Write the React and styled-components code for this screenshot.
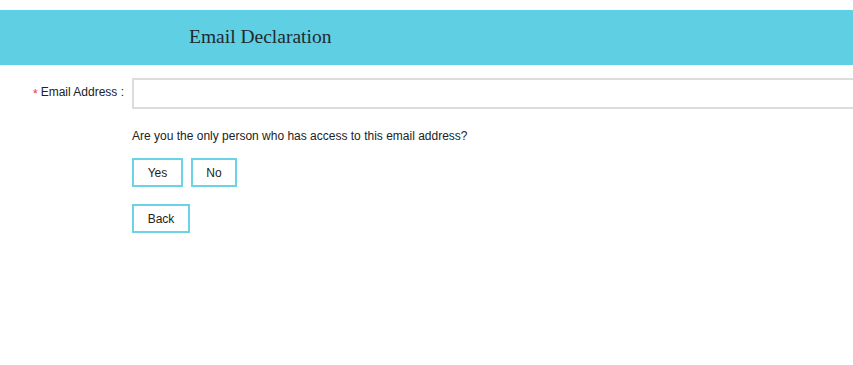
import React from 'react';
import styled, { createGlobalStyle } from 'styled-components';

const GlobalStyle = createGlobalStyle`
  body {
    margin: 0;
    background: #ffffff;
    font-family: Arial, "Liberation Sans", sans-serif;
    overflow: hidden;
  }
`;

const Page = styled.div`
  width: 853px;
  height: 365px;
  padding-top: 10px;
  box-sizing: border-box;
  overflow: hidden;
`;

const Header = styled.div`
  height: 55px;
  background: #5fcfe3;
  display: flex;
  align-items: center;
  padding-left: 189px;
`;

const Title = styled.h1`
  margin: 0;
  font-family: "Liberation Serif", "Times New Roman", serif;
  font-weight: normal;
  font-size: 19.5px;
  color: #222a30;
  padding-bottom: 1px;
`;

const Form = styled.div`
  padding-top: 13px;
`;

const FieldRow = styled.div`
  display: flex;
  align-items: center;
  overflow: hidden;
`;

const Label = styled.label`
  flex: none;
  width: 132px;
  box-sizing: border-box;
  padding-right: 8px;
  padding-bottom: 3px;
  display: flex;
  justify-content: flex-end;
  align-items: center;
  white-space: nowrap;
  font-size: 12px;
  color: #222;
  gap: 3px;
`;

const Required = styled.span`
  color: #e8334a;
  font-size: 12px;
  margin-top: 3px;
`;

const Input = styled.input`
  flex: none;
  width: 760px;
  height: 31px;
  box-sizing: border-box;
  border: 2px solid #dcdcdc;
  outline: none;
  padding: 0 8px;
  font-size: 12px;
`;

const Body = styled.div`
  padding-left: 132px;
  padding-top: 20px;
  display: flex;
  flex-direction: column;
  align-items: flex-start;
`;

const Question = styled.p`
  margin: 0;
  font-size: 12px;
  color: #222;
  line-height: 14px;
`;

const ButtonRow = styled.div`
  display: flex;
  gap: 8px;
  margin-top: ${(props) => props.$top}px;
`;

const Button = styled.button`
  height: 29px;
  width: ${(props) => props.$w}px;
  box-sizing: border-box;
  background: #fff;
  border: 2px solid #6ad3e6;
  font-family: Arial, "Liberation Sans", sans-serif;
  font-size: 12px;
  color: #222;
  padding: 0;
  cursor: pointer;
`;

const App = () => {
  return (
    <Page>
      <GlobalStyle />
      <Header>
        <Title>Email Declaration</Title>
      </Header>
      <Form>
        <FieldRow>
          <Label>
            <Required>*</Required>Email Address :
          </Label>
          <Input type="text" />
        </FieldRow>
        <Body>
          <Question>Are you the only person who has access to this email address?</Question>
          <ButtonRow $top={15}>
            <Button $w={51}>Yes</Button>
            <Button $w={46}>No</Button>
          </ButtonRow>
          <ButtonRow $top={17}>
            <Button $w={58}>Back</Button>
          </ButtonRow>
        </Body>
      </Form>
    </Page>
  );
};

export default App;
